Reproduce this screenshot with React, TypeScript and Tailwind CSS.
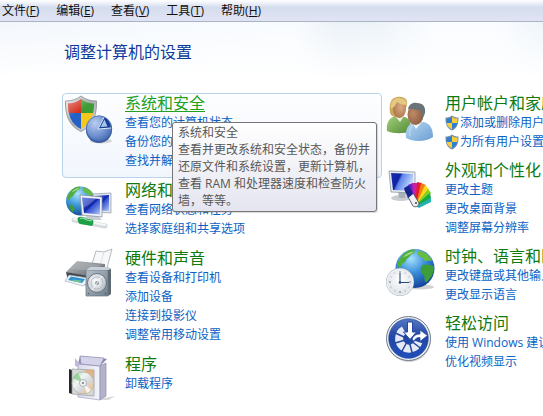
// src/App.tsx

import React from 'react';
import clsx from 'clsx';

interface MenuItem {
  label: string;
  hotkey: string;
}

interface Category {
  title: string;
  links: string[];
  icon: React.FC;
  active?: boolean;
  shielded?: boolean;
  tip?: string;
}

const ICON_CLASS = 'mt-px ml-px h-12 w-12 overflow-visible';

const SecurityIcon: React.FC = () => (
  <svg viewBox="0 0 48 48" className={ICON_CLASS} aria-hidden="true">
    <defs>
      <clipPath id="shieldClip">
        <path d="M17 4c4 3 8 4.500 13 4.500C30 20 27 29 17 34 7 29 4 20 4 8.500 9 8.500 13 7 17 4z" />
      </clipPath>
      <linearGradient id="shieldRim" x1="0" y1="0" x2="1" y2="1">
        <stop offset="0" stopColor="#f4f4f4" />
        <stop offset="0.5" stopColor="#a9adb0" />
        <stop offset="1" stopColor="#e3e5e7" />
      </linearGradient>
      <radialGradient id="pieFill" cx="0.35" cy="0.3" r="0.8">
        <stop offset="0" stopColor="#b9cdf0" />
        <stop offset="0.6" stopColor="#6f91cf" />
        <stop offset="1" stopColor="#3d63ab" />
      </radialGradient>
      <linearGradient id="shieldGloss" x1="0" y1="0" x2="0.6" y2="1">
        <stop offset="0" stopColor="#fff" stopOpacity="0.5" />
        <stop offset="0.5" stopColor="#fff" stopOpacity="0" />
      </linearGradient>
    </defs>
    <ellipse cx="37" cy="46" rx="11" ry="2.500" fill="#000" opacity="0.15" />
    <path
      d="M17 1c4.500 3.500 9.500 5 15.500 5C33 20 29 31 17 36.500 5 31 1 20 1.500 6 7.500 6 12.500 4.500 17 1z"
      fill="url(#shieldRim)"
      stroke="#8b8f93"
      strokeWidth="0.800"
    />
    <g clipPath="url(#shieldClip)">
      <rect x="3" y="3" width="14" height="16" fill="#d5301f" />
      <rect x="17" y="3" width="14" height="16" fill="#3f9b35" />
      <rect x="3" y="18" width="14" height="17" fill="#2561c4" />
      <rect x="17" y="18" width="14" height="17" fill="#f6c81c" />
      <rect x="3" y="3" width="28" height="32" fill="url(#shieldGloss)" />
    </g>
    <circle cx="35" cy="35" r="13" fill="#3a5c9d" />
    <circle cx="35" cy="33.500" r="12.700" fill="url(#pieFill)" stroke="#4166ad" strokeWidth="0.800" />
    <path d="M34 34l6-11.500c4 1.500 6.500 5.500 6.500 10.500z" fill="#16408f" />
    <path d="M36.500 32l4-7.500 3 7z" fill="#a9c2ef" />
    <path d="M34 34l6-11.500M34 34l13-1" stroke="#dce8fb" strokeWidth="1" />
  </svg>
);

const Continents: React.FC = () => (
  <g>
    <path d="M-16-8c3-7 9-11 15-11 2 2 0 4-3 5-1 3-4 3-5 6-1 3-5 2-5 6-1 2-4 0-4-3z" fill="#4fae3c" />
    <path d="M4-18c6 1 11 5 13 10-2 1-5-1-6 1-3-1-2-4-5-4-3-1-4-5-2-7z" fill="#66bd45" />
    <path d="M7-3c3-2 8-1 12 1 0 7-3 12-8 16-3-2 0-6-3-8-3-2-3-7-1-9z" fill="#3d9d3a" />
    <path d="M-15 5c4-1 7 2 7 5 0 2-1 4-2 5-3-2-5-6-5-10z" fill="#3d9d3a" />
    <path d="M-12-11c3-4 7-6 11-6-3 3-7 4-11 6z" fill="#c9efb0" opacity="0.700" />
  </g>
);

const NetworkIcon: React.FC = () => (
  <svg viewBox="0 0 48 48" className={ICON_CLASS} aria-hidden="true">
    <defs>
      <radialGradient id="netGlobe" cx="0.4" cy="0.25" r="0.8">
        <stop offset="0" stopColor="#aee3fb" />
        <stop offset="0.5" stopColor="#3c97d8" />
        <stop offset="1" stopColor="#11458f" />
      </radialGradient>
      <linearGradient id="netScreen" x1="0" y1="0" x2="1" y2="1">
        <stop offset="0" stopColor="#3a63dd" />
        <stop offset="0.500" stopColor="#1224a8" />
        <stop offset="0.520" stopColor="#2d4bd0" />
        <stop offset="1" stopColor="#b4c8f7" />
      </linearGradient>
    </defs>
    <circle cx="16.500" cy="19" r="14.500" fill="url(#netGlobe)" />
    <g transform="translate(16.500 19) scale(0.760)">
      <Continents />
    </g>
    <path d="M29 12l18-1v20l-18-1z" fill="#dfe5ee" stroke="#8d97a6" strokeWidth="0.700" />
    <path d="M31 14l14-1v16l-14-1z" fill="url(#netScreen)" />
    <path d="M22 34l12 0 4 4H20z" fill="#c9ced6" />
    <path d="M16 13l22 2v20l-20-2z" fill="#eef1f6" stroke="#8d97a6" strokeWidth="0.800" />
    <path d="M18 15.500l18 1.500v15.500L20 31z" fill="url(#netScreen)" />
    <path d="M18 15.500l14 1.200c-5 4-9 8-13 9z" fill="#fff" opacity="0.250" />
    <path d="M10 38l31 6" stroke="#d6dadd" strokeWidth="5" strokeLinecap="round" />
    <path d="M10 37l31 6" stroke="#f5f7f8" strokeWidth="2" strokeLinecap="round" />
    <path d="M14 35.500c3-1.500 6-.5 8 1l7 1.500c1 2 0 5-1 6l-12-2c-2-1-3-5-2-6.500z" fill="#1f9f46" />
    <path d="M16 36.500c3-1 5 0 7 1.500l5 1" stroke="#8ee0a2" strokeWidth="1.200" fill="none" />
  </svg>
);

const HardwareIcon: React.FC = () => (
  <svg viewBox="0 0 48 48" className={ICON_CLASS} aria-hidden="true">
    <defs>
      <linearGradient id="printerTop" x1="0" y1="0" x2="1" y2="1">
        <stop offset="0" stopColor="#c4c8cc" />
        <stop offset="1" stopColor="#50565c" />
      </linearGradient>
      <linearGradient id="speakerBox" x1="0" y1="0" x2="1" y2="1">
        <stop offset="0" stopColor="#b5bfc9" />
        <stop offset="1" stopColor="#71808e" />
      </linearGradient>
      <radialGradient id="speakerCone" cx="0.400" cy="0.400" r="0.700">
        <stop offset="0" stopColor="#fbfcfd" />
        <stop offset="0.700" stopColor="#ccd2d8" />
        <stop offset="1" stopColor="#8b969f" />
      </radialGradient>
    </defs>
    <path d="M32 1l8 1 8-3-5 19-15-4z" fill="#f7f8fa" stroke="#a6abb1" strokeWidth="0.800" />
    <path d="M40 2l-4 14" stroke="#d5d9de" strokeWidth="0.800" />
    <path d="M13 11l28 3v8l-13 6L2 22z" fill="url(#printerTop)" />
    <path d="M14 12l24 3-10 6L6 19z" fill="#a9adb1" opacity="0.600" />
    <path d="M2 22l27 5v9l-9-1-16-4z" fill="#3f464d" />
    <path d="M5 25l19 3 1 4-6 4L1 31z" fill="#eef5fa" stroke="#9aa5ae" strokeWidth="0.600" />
    <path d="M7 26.500l14 2.500-3 4L4 30z" fill="#2d8fd0" />
    <path d="M9 29.500l9 1-2 2-8-1.500z" fill="#6fc48b" />
    <path d="M22 20l4-3h17l4 2v25l-3 2H22z" fill="#5d6974" />
    <path d="M22 20h22v26H22z" fill="url(#speakerBox)" stroke="#69757f" strokeWidth="0.700" />
    <path d="M22 20l4-3h17l4 2-3 1z" fill="#c9d0d7" />
    <circle cx="33" cy="33" r="9.500" fill="url(#speakerCone)" stroke="#65717c" strokeWidth="0.900" />
    <circle cx="33" cy="33" r="6" fill="none" stroke="#aab3bb" strokeWidth="0.800" />
    <circle cx="33" cy="33" r="2" fill="#8f9aa4" />
    <path d="M33 33l5-7M33 33l-5 7" stroke="#fff" strokeWidth="1" opacity="0.800" />
    <circle cx="24.500" cy="43.500" r="0.800" fill="#4d5963" />
    <circle cx="41.500" cy="43.500" r="0.800" fill="#4d5963" />
  </svg>
);

const ProgramsIcon: React.FC = () => (
  <svg viewBox="0 0 48 48" className={ICON_CLASS} aria-hidden="true">
    <defs>
      <linearGradient id="boxFront" x1="0" y1="0" x2="1" y2="0">
        <stop offset="0" stopColor="#d9d9ea" />
        <stop offset="1" stopColor="#f4f4fb" />
      </linearGradient>
      <linearGradient id="discShine" x1="0" y1="0" x2="1" y2="1">
        <stop offset="0" stopColor="#9fd6a4" />
        <stop offset="0.350" stopColor="#f2f4f3" />
        <stop offset="0.600" stopColor="#d5d8de" />
        <stop offset="0.850" stopColor="#f1c58b" />
        <stop offset="1" stopColor="#e8eef5" />
      </linearGradient>
    </defs>
    <path d="M40 42l11-2-6 4-9 0z" fill="#000" opacity="0.150" />
    <path d="M14 8l22 2v34l-22-3z" fill="url(#boxFront)" stroke="#a3a2c0" strokeWidth="0.700" />
    <path d="M36 10l6-3v33l-6 4z" fill="#b3b2cb" stroke="#8f8eb0" strokeWidth="0.700" />
    <path d="M16 0l22 2 5 1-7 7-22-2z" fill="#8a88b4" />
    <path d="M16 0l24 2-4 8-19-2z" fill="#d5d3e9" stroke="#9290b6" strokeWidth="0.700" />
    <path d="M11 2l5 6-2 3-3-1z" fill="#bcbad8" />
    <path d="M5 13l3 1v24l-3-1z" fill="#27282b" />
    <path d="M8 13l22 1v26L8 38z" fill="#d3d8d3" stroke="#969b98" strokeWidth="0.700" opacity="0.950" />
    <path d="M20 14h10v9l-7-4z" fill="#e9a45c" opacity="0.700" />
    <circle cx="19" cy="27" r="11" fill="url(#discShine)" stroke="#a9aeac" strokeWidth="0.700" />
    <path d="M19 27L9 22a11 11 0 0 1 5-5z" fill="#7fc683" opacity="0.700" />
    <path d="M19 27l8 7a11 11 0 0 1-4 3z" fill="#fff" opacity="0.800" />
    <circle cx="19" cy="27" r="3.500" fill="#f6f7f8" stroke="#9da3a5" strokeWidth="0.800" />
    <circle cx="19" cy="27" r="1.200" fill="#8d9497" />
  </svg>
);

const UsersIcon: React.FC = () => (
  <svg viewBox="0 0 48 48" className={ICON_CLASS} aria-hidden="true">
    <defs>
      <linearGradient id="womanShirt" x1="0" y1="0" x2="1" y2="1">
        <stop offset="0" stopColor="#a6cf7c" />
        <stop offset="1" stopColor="#4f8b35" />
      </linearGradient>
      <linearGradient id="manShirt" x1="0" y1="0" x2="1" y2="1">
        <stop offset="0" stopColor="#b8d7f2" />
        <stop offset="1" stopColor="#6a9fd3" />
      </linearGradient>
      <radialGradient id="womanFace" cx="0.600" cy="0.400" r="0.700">
        <stop offset="0" stopColor="#dcaa80" />
        <stop offset="1" stopColor="#a8714a" />
      </radialGradient>
      <radialGradient id="manFace" cx="0.350" cy="0.450" r="0.800">
        <stop offset="0" stopColor="#bf8a66" />
        <stop offset="1" stopColor="#805339" />
      </radialGradient>
    </defs>
    <path d="M3 36c-1-8 2-13 8-15l10 1c5 2 6 6 6 14-7 3-17 3-24 0z" fill="url(#womanShirt)" />
    <path d="M11 21l5 6 4-6z" fill="#e9f2df" />
    <path d="M6 18C5 10 6 3 13 2c8-1 11 3 10 8l-3 10-6 2c-3 1-7-1-8-4z" fill="#c9a75c" />
    <ellipse cx="15.500" cy="14" rx="6.500" ry="9" fill="url(#womanFace)" />
    <path d="M7 14c-1-7 2-11 8-11 5 0 8 3 8 7-4 0-8-1-10-3-1 3-3 5-6 7z" fill="#e3c981" />
    <path d="M22 43c-1-9 2-14 9-16h9c7 2 9 8 9 15-7 5-20 5-27 1z" fill="url(#manShirt)" />
    <path d="M28 27l4 7 6-7z" fill="#f5f9fc" />
    <ellipse cx="31.500" cy="19.500" rx="8" ry="10.500" fill="url(#manFace)" />
    <path d="M24 14c1-5 5-7 9-6 6 0 9 4 8 10-1 3-2 5-3 5 0-4-1-7-3-8-4 0-7-2-11-1z" fill="#6b7278" />
    <path d="M26 41c-1-5 0-8 3-11" stroke="#dcecfa" strokeWidth="1" fill="none" opacity="0.700" />
  </svg>
);

const AppearanceIcon: React.FC = () => (
  <svg viewBox="0 0 48 48" className={ICON_CLASS} aria-hidden="true">
    <defs>
      <linearGradient id="themeScreen" x1="0" y1="0" x2="1" y2="0.400">
        <stop offset="0" stopColor="#1430b4" />
        <stop offset="0.400" stopColor="#1021a0" />
        <stop offset="0.500" stopColor="#5b83ec" />
        <stop offset="1" stopColor="#c5d8fb" />
      </linearGradient>
    </defs>
    <ellipse cx="17" cy="36" rx="10" ry="3" fill="#c9cdd3" />
    <path d="M14 29l8 2-1 5h-6z" fill="#aab0b8" />
    <path d="M5 9l26 1v21L7 30z" fill="#e6e9ef" stroke="#8b95a5" strokeWidth="0.800" />
    <path d="M7 11l22 1v17L9 28z" fill="url(#themeScreen)" />
    <g transform="translate(33 44)">
      <path d="M-4-1L-13-18l5-3L1-2z" fill="#1a2fb8" />
      <path d="M-3-1L-9-21l5-2L2-2z" fill="#5b21c2" />
      <path d="M-3-1L-5-23l6 0L2-2z" fill="#c81fa8" />
      <path d="M-2-1L0-24l5 1L2-1z" fill="#e31c2c" />
      <path d="M-1-1L4-23l5 2L2 0z" fill="#f47a16" />
      <path d="M-1-1L8-21l4 4L2 0z" fill="#f9da19" />
      <path d="M-1-1L11-17l3 4L2 1z" fill="#7fd022" />
      <path d="M-1-1L13-13l1 5L2 1z" fill="#18a845" />
      <path d="M-1 0L14-8l0 4L2 2z" fill="#24b3b0" />
      <path d="M-9-9l5-4 6 10c0 3-3 5-6 3z" fill="#f0f1f4" stroke="#3f4250" strokeWidth="0.800" />
      <path d="M-13-17l5-3 4 8-5 4z" fill="#18258f" />
      <circle cx="-1" cy="-3" r="1" fill="#3f4250" />
    </g>
  </svg>
);

const ClockIcon: React.FC = () => (
  <svg viewBox="0 0 48 48" className={ICON_CLASS} aria-hidden="true">
    <defs>
      <radialGradient id="clockGlobe" cx="0.400" cy="0.250" r="0.800">
        <stop offset="0" stopColor="#a6e2fb" />
        <stop offset="0.450" stopColor="#3c90dc" />
        <stop offset="1" stopColor="#0f3a93" />
      </radialGradient>
      <radialGradient id="clockFace" cx="0.500" cy="0.400" r="0.600">
        <stop offset="0" stopColor="#ffffff" />
        <stop offset="1" stopColor="#dbe1e7" />
      </radialGradient>
    </defs>
    <ellipse cx="35" cy="39" rx="15" ry="2.500" fill="#000" opacity="0.180" />
    <circle cx="31" cy="20.500" r="19.500" fill="url(#clockGlobe)" />
    <g transform="translate(31 20.500)">
      <Continents />
    </g>
    <circle cx="16" cy="34" r="14" fill="#a9b1b8" />
    <circle cx="16" cy="34" r="13" fill="url(#clockFace)" stroke="#eef1f4" strokeWidth="1.200" />
    <path d="M16 23v2M16 43v2M5 34h2M25 34h2" stroke="#7a848d" strokeWidth="1" />
    <path
      d="M10.500 24.500l.7 1.200M21.500 24.500l-.7 1.200M10.500 43.500l.7-1.200M21.500 43.500l-.7-1.200M6.500 28.500l1.200.7M6.500 39.500l1.200-.7M25.500 28.500l-1.200.7M25.500 39.500l-1.200-.7"
      stroke="#9ba4ac"
      strokeWidth="0.800"
    />
    <path d="M16 25v9.500h9" stroke="#2b4a7c" strokeWidth="1.100" fill="none" />
    <circle cx="16" cy="34.500" r="1.300" fill="#2b4a7c" />
  </svg>
);

const EaseIcon: React.FC = () => (
  <svg viewBox="0 0 48 48" className={ICON_CLASS} aria-hidden="true">
    <defs>
      <linearGradient id="easeFill" x1="0" y1="0" x2="0" y2="1">
        <stop offset="0" stopColor="#5577c4" />
        <stop offset="0.450" stopColor="#2347a3" />
        <stop offset="1" stopColor="#1f50bd" />
      </linearGradient>
    </defs>
    <circle cx="25" cy="25" r="22" fill="#000" opacity="0.200" />
    <circle cx="24.500" cy="23.500" r="22" fill="#eef1f5" stroke="#707b8c" strokeWidth="1" />
    <circle cx="24.500" cy="23.500" r="19.800" fill="url(#easeFill)" stroke="#163c8f" strokeWidth="0.600" />
    {/* segmented ring, open between the two arrows */}
    <path
      d="M34.500 27A10 10 0 1 1 20 15"
      stroke="#e4e9f4"
      strokeWidth="8"
      fill="none"
    />
    <path
      d="M24.500 24L9 17M24.500 24L8 29M24.500 24L16 40M24.500 24L29 41M24.500 24L39 35"
      stroke="#2347a3"
      strokeWidth="1.500"
    />
    <path d="M23.500 7h5v10h4L26 24.500 19.500 17h4z" fill="#fff" stroke="#2347a3" strokeWidth="1" />
    <path d="M28 24c2-4 5-5 8-5v-4l7.500 5.500-7.500 6v-4c-3 0-5 1-6 4z" fill="#fff" stroke="#2347a3" strokeWidth="0.800" />
  </svg>
);

const UacShield: React.FC = () => (
  <svg viewBox="0 0 14 16" className="h-4 w-3.5" aria-hidden="true">
    <path d="M7 .5c2 1.500 4 2 6.500 2C13.700 9 12 13.500 7 15.500 2 13.500.3 9 .5 2.500 3 2.500 5 2 7 .5z" fill="#7890a6" />
    <path d="M7 2v6H1.700C1.500 6.700 1.500 5 1.600 3.600 3.700 3.500 5.300 3.100 7 2z" fill="#2e7ed2" />
    <path d="M7 2v6h5.300c.2-1.300.2-3 .1-4.400C10.300 3.500 8.700 3.100 7 2z" fill="#f7cf3d" />
    <path d="M7 8v6.200C4 12.900 2.300 10.900 1.700 8z" fill="#f7cf3d" />
    <path d="M7 8v6.200c3-1.300 4.700-3.300 5.300-6.200z" fill="#2e7ed2" />
  </svg>
);

const menu: MenuItem[] = [
  { label: '文件', hotkey: 'F' },
  { label: '编辑', hotkey: 'E' },
  { label: '查看', hotkey: 'V' },
  { label: '工具', hotkey: 'T' },
  { label: '帮助', hotkey: 'H' },
];

const leftColumn: Category[] = [
  {
    title: '系统和安全',
    links: ['查看您的计算机状态', '备份您的计算机', '查找并解决问题'],
    icon: SecurityIcon,
    active: true,
    tip: '查看并更改系统和安全状态，备份并还原文件和系统设置，更新计算机，查看 RAM 和处理器速度和检查防火墙，等等。',
  },
  { title: '网络和 Internet', links: ['查看网络状态和任务', '选择家庭组和共享选项'], icon: NetworkIcon },
  {
    title: '硬件和声音',
    links: ['查看设备和打印机', '添加设备', '连接到投影仪', '调整常用移动设置'],
    icon: HardwareIcon,
  },
  { title: '程序', links: ['卸载程序'], icon: ProgramsIcon },
];

const rightColumn: Category[] = [
  {
    title: '用户帐户和家庭安全',
    links: ['添加或删除用户帐户', '为所有用户设置家长控制'],
    icon: UsersIcon,
    shielded: true,
  },
  { title: '外观和个性化', links: ['更改主题', '更改桌面背景', '调整屏幕分辨率'], icon: AppearanceIcon },
  { title: '时钟、语言和区域', links: ['更改键盘或其他输入法', '更改显示语言'], icon: ClockIcon },
  { title: '轻松访问', links: ['使用 Windows 建议的设置', '优化视频显示'], icon: EaseIcon },
];

const CategoryBlock: React.FC<{ category: Category }> = ({ category }) => {
  const Icon = category.icon;

  return (
    <section
      className={clsx(
        'relative grid grid-cols-[62px_1fr] rounded-sm border pb-[7px]',
        category.active
          ? 'border-[#b9d3ee] bg-linear-to-b from-[#fdfeff] to-[#f1f6fd]'
          : 'border-transparent'
      )}
    >
      <Icon />
      <div className="whitespace-nowrap">
        <h2 className="text-base leading-[19px]">
          <a
            href="#"
            className={clsx(
              category.active ? 'text-[#22a022] underline underline-offset-2' : 'text-[#0f7a0f]'
            )}
          >
            {category.title}
          </a>
        </h2>
        <ul>
          {category.links.map((link) => (
            <li key={link} className="flex items-center gap-px text-xs leading-[19px]">
              {category.shielded && <UacShield />}
              <a href="#" className="text-[#0b62c4]">
                {link}
              </a>
            </li>
          ))}
        </ul>
      </div>

      {/* Tooltip */}
      {category.tip && (
        <div
          role="tooltip"
          className="absolute top-7 left-[109px] z-10 w-[205px] rounded-[3px] border border-[#767676] bg-linear-to-b from-white to-[#e4e5f0] px-[5px] pt-px pb-0.5 text-xs leading-[17px] whitespace-normal text-[#575757] shadow-[1px_1px_1px_rgba(0,0,0,0.15)]"
        >
          <p>{category.title}</p>
          <p>{category.tip}</p>
        </div>
      )}
    </section>
  );
};

const App: React.FC = () => {
  return (
    <div className="min-h-screen overflow-hidden bg-white font-['Open_Sans','Noto_Sans_CJK_SC',sans-serif]">
      {/* Menu Bar */}
      <nav className="flex h-[22px] items-center gap-[17px] border-b border-[#a9b4c4] bg-linear-to-b from-white via-[#d5deee] via-35% to-[#e1e3f5] pl-0.5 text-xs text-[#111]">
        {menu.map((item) => (
          <button key={item.hotkey} type="button" className="leading-5 whitespace-nowrap">
            {item.label}(<u>{item.hotkey}</u>)
          </button>
        ))}
      </nav>

      {/* Main Content */}
      <main className="bg-[linear-gradient(to_bottom,transparent,white_56px),linear-gradient(to_right,#f3f7fc,#f9fcff_54%,#ebf2f8_62%,#edf4f9_70%,#fafcff_80%,#fafcff_92%,#eef5fb)] pt-5 pl-[62px]">
        <h1 className="pl-0.5 text-base leading-5 text-[#0d3a9c]">调整计算机的设置</h1>

        <div className="mt-[31px] grid grid-cols-[320px_320px] items-start">
          <div className="flex flex-col gap-0.5">
            {leftColumn.map((category) => (
              <CategoryBlock key={category.title} category={category} />
            ))}
          </div>
          <div className="flex flex-col gap-px">
            {rightColumn.map((category) => (
              <CategoryBlock key={category.title} category={category} />
            ))}
          </div>
        </div>
      </main>
    </div>
  );
};

export default App;
